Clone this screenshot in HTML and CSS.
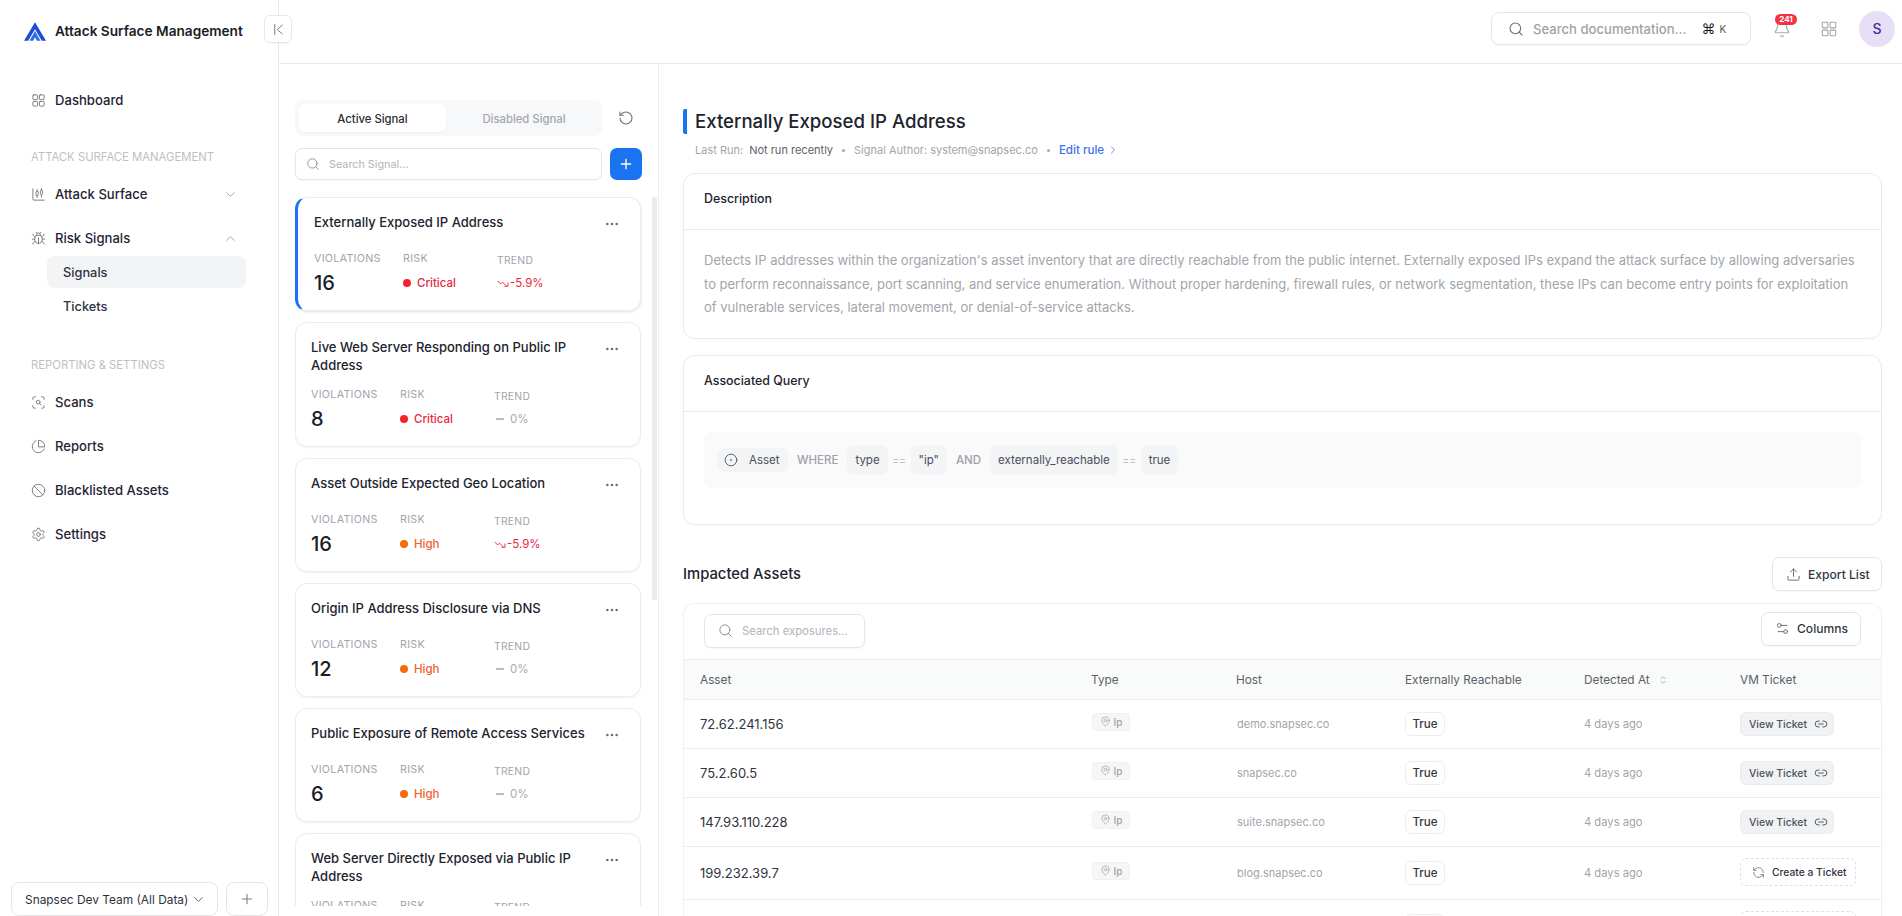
FILE: index.html
```html
<!DOCTYPE html>
<html lang="en">
<head>
<meta charset="utf-8">
<title>Attack Surface Management</title>
<link rel="stylesheet" href="styles.css">
</head>
<body>
<svg class="sprite" aria-hidden="true">
  <symbol id="search" viewBox="0 0 24 24"><circle cx="11" cy="11" r="8"/><path d="m21 21-4.3-4.3"/></symbol>
  <symbol id="chev-down" viewBox="0 0 24 24"><path d="m6 9 6 6 6-6"/></symbol>
  <symbol id="chev-up" viewBox="0 0 24 24"><path d="m18 15-6-6-6 6"/></symbol>
  <symbol id="chev-right" viewBox="0 0 24 24"><path d="m9 18 6-6-6-6"/></symbol>
  <symbol id="plus" viewBox="0 0 24 24"><path d="M5 12h14M12 5v14"/></symbol>
  <symbol id="grid" viewBox="0 0 24 24"><rect x="3" y="3" width="7.5" height="7.5" rx="1.2"/><rect x="13.5" y="3" width="7.5" height="7.5" rx="1.2"/><rect x="3" y="13.5" width="7.5" height="7.5" rx="1.2"/><rect x="13.5" y="13.5" width="7.5" height="7.5" rx="1.2"/></symbol>
  <symbol id="pin" viewBox="0 0 24 24"><path d="M20 10c0 6-8 12-8 12s-8-6-8-12a8 8 0 0 1 16 0Z"/><circle cx="12" cy="10" r="3"/></symbol>
  <symbol id="link" viewBox="0 0 24 24"><path d="M9 17H7A5 5 0 0 1 7 7h2"/><path d="M15 7h2a5 5 0 1 1 0 10h-2"/><path d="M8 12h8"/></symbol>
  <symbol id="cycle" viewBox="0 0 24 24"><path d="M21 12a9 9 0 0 0-15-6.7L3 8"/><path d="M3 3v5h5"/><path d="M3 12a9 9 0 0 0 15 6.7l3-2.7"/><path d="M16 16h5v5"/></symbol>
  <symbol id="dots" viewBox="0 0 24 24"><circle cx="4" cy="12" r="2.2"/><circle cx="12" cy="12" r="2.2"/><circle cx="20" cy="12" r="2.2"/></symbol>
  <symbol id="trend" viewBox="0 0 24 24"><path d="M1 7l6 6 4-4 8 8"/><path d="M23 11v7h-7"/></symbol>
</svg>

<div class="app">
  <aside class="sidebar">
    <div class="brand">
      <svg class="logo" viewBox="0 0 24 20"><path class="logo-a" d="M12 0 24 20h-4.600L12 7.500 4.600 20H0Z"/><path class="logo-b" d="M12 9.500 18 20h-4l-2-3.600L10 20H6Z"/></svg>
      <span class="brand-name">Attack Surface Management</span>
    </div>
    <nav class="nav">
      <a class="nav-item nav-first"><svg class="ico nav-ico"><use href="#grid"/></svg>Dashboard</a>
      <div class="nav-label">Attack Surface Management</div>
      <a class="nav-item"><svg class="ico nav-ico" viewBox="0 0 24 24"><path d="M3 3v16a2 2 0 0 0 2 2h16"/><rect x="8" y="7" width="3.500" height="7" rx="1.700"/><path d="M9.700 4v3M9.700 14v3"/><rect x="15" y="5" width="3.500" height="7" rx="1.700"/><path d="M16.700 2.500V5M16.700 12v4"/></svg>Attack Surface<svg class="ico chev"><use href="#chev-down"/></svg></a>
      <a class="nav-item"><svg class="ico nav-ico" viewBox="0 0 24 24"><path d="m8 2 1.900 1.900M14.100 3.900 16 2M9 7.100v-1a3 3 0 1 1 6 0v1"/><path d="M12 20c-3.300 0-6-2.700-6-6v-3a4 4 0 0 1 4-4h4a4 4 0 0 1 4 4v3c0 3.300-2.700 6-6 6Z"/><path d="M12 20v-9M6.500 9C4.600 8.800 3 7.100 3 5M6 13H2M3 21c0-2.100 1.700-3.900 3.800-4M20.970 5c0 2.100-1.600 3.800-3.500 4M22 13h-4M17.200 17c2.100.1 3.800 1.900 3.800 4"/></svg>Risk Signals<svg class="ico chev"><use href="#chev-up"/></svg></a>
      <a class="sub-item sub-active">Signals</a>
      <a class="sub-item">Tickets</a>
      <div class="nav-label nav-label-2">Reporting &amp; Settings</div>
      <a class="nav-item"><svg class="ico nav-ico" viewBox="0 0 24 24"><path d="M3 7V5a2 2 0 0 1 2-2h2M17 3h2a2 2 0 0 1 2 2v2M21 17v2a2 2 0 0 1-2 2h-2M7 21H5a2 2 0 0 1-2-2v-2"/><circle cx="11.500" cy="11.500" r="3"/><path d="m16 16-2.200-2.200"/></svg>Scans</a>
      <a class="nav-item"><svg class="ico nav-ico" viewBox="0 0 24 24"><path d="M21.200 15.900A10 10 0 1 1 8 2.800"/><path d="M22 12A10 10 0 0 0 12 2v10Z"/></svg>Reports</a>
      <a class="nav-item"><svg class="ico nav-ico" viewBox="0 0 24 24"><circle cx="12" cy="12" r="10"/><path d="m4.900 4.900 14.200 14.200"/></svg>Blacklisted Assets</a>
      <a class="nav-item"><svg class="ico nav-ico" viewBox="0 0 24 24"><path d="M12.200 2h-.400a2 2 0 0 0-2 2v.200a2 2 0 0 1-1 1.700l-.400.300a2 2 0 0 1-2 0l-.200-.100a2 2 0 0 0-2.700.700l-.200.400a2 2 0 0 0 .700 2.700l.200.100a2 2 0 0 1 1 1.700v.500a2 2 0 0 1-1 1.700l-.200.100a2 2 0 0 0-.700 2.700l.200.400a2 2 0 0 0 2.700.700l.200-.100a2 2 0 0 1 2 0l.400.300a2 2 0 0 1 1 1.700v.200a2 2 0 0 0 2 2h.400a2 2 0 0 0 2-2v-.200a2 2 0 0 1 1-1.700l.400-.300a2 2 0 0 1 2 0l.200.100a2 2 0 0 0 2.700-.700l.200-.400a2 2 0 0 0-.700-2.700l-.200-.100a2 2 0 0 1-1-1.700v-.500a2 2 0 0 1 1-1.700l.200-.100a2 2 0 0 0 .700-2.700l-.200-.400a2 2 0 0 0-2.700-.700l-.200.100a2 2 0 0 1-2 0l-.400-.300a2 2 0 0 1-1-1.700V4a2 2 0 0 0-2-2Z"/><circle cx="12" cy="12" r="3"/></svg>Settings</a>
    </nav>
    <div class="team">
      <button class="team-select">Snapsec Dev Team (All Data)<svg class="ico team-chev"><use href="#chev-down"/></svg></button>
      <button class="team-add"><svg class="ico team-plus"><use href="#plus"/></svg></button>
    </div>
  </aside>

  <button class="collapse"><svg class="ico collapse-ico" viewBox="0 0 24 24"><path d="M6 4v16M18 5l-8 7 8 7"/></svg></button>

  <div class="main">
    <header class="topbar">
      <div class="doc-search">
        <svg class="ico doc-ico"><use href="#search"/></svg>
        <span class="doc-text">Search documentation...</span>
        <span class="kbd"><b>⌘</b><i>K</i></span>
      </div>
      <div class="bell">
        <svg class="ico bell-ico" viewBox="0 0 24 24"><path d="M10.300 21a1.900 1.900 0 0 0 3.400 0"/><path d="M3.300 15.300A1 1 0 0 0 4 17h16a1 1 0 0 0 .7-1.700C19.400 14 18 12.500 18 8A6 6 0 0 0 6 8c0 4.500-1.400 6-2.700 7.300"/></svg>
        <span class="badge">241</span>
      </div>
      <svg class="ico apps-ico"><use href="#grid"/></svg>
      <div class="avatar">S</div>
    </header>

    <div class="content">
      <section class="signals">
        <div class="signals-tabs">
          <div class="tabs">
            <div class="tab tab-on">Active Signal</div>
            <div class="tab">Disabled Signal</div>
          </div>
          <svg class="ico reset" viewBox="0 0 24 24"><path d="M3 12a9 9 0 1 0 9-9 9.750 9.750 0 0 0-6.740 2.740L3 8"/><path d="M3 3v5h5"/></svg>
        </div>
        <div class="signals-search">
          <div class="input">
            <svg class="ico input-ico"><use href="#search"/></svg>
            <span>Search Signal...</span>
          </div>
          <button class="add"><svg class="ico add-ico"><use href="#plus"/></svg></button>
        </div>
        <div class="list-wrap">
          <div class="list">
            <article class="card card-on">
              <div class="card-head"><h3>Externally Exposed IP Address</h3><svg class="dots"><use href="#dots"/></svg></div>
              <div class="stats">
                <div class="stat s1"><span class="k">Violations</span><span class="n">16</span></div>
                <div class="stat s2"><span class="k">Risk</span><span class="r crit"><i></i>Critical</span></div>
                <div class="stat s3"><span class="k k3">Trend</span><span class="t down"><svg class="ico tr"><use href="#trend"/></svg>-5.9%</span></div>
              </div>
            </article>
            <article class="card">
              <div class="card-head"><h3>Live Web Server Responding on Public IP Address</h3><svg class="dots"><use href="#dots"/></svg></div>
              <div class="stats">
                <div class="stat s1"><span class="k">Violations</span><span class="n">8</span></div>
                <div class="stat s2"><span class="k">Risk</span><span class="r crit"><i></i>Critical</span></div>
                <div class="stat s3"><span class="k k3">Trend</span><span class="t"><em></em>0%</span></div>
              </div>
            </article>
            <article class="card">
              <div class="card-head"><h3>Asset Outside Expected Geo Location</h3><svg class="dots"><use href="#dots"/></svg></div>
              <div class="stats">
                <div class="stat s1"><span class="k">Violations</span><span class="n">16</span></div>
                <div class="stat s2"><span class="k">Risk</span><span class="r high"><i></i>High</span></div>
                <div class="stat s3"><span class="k k3">Trend</span><span class="t down"><svg class="ico tr"><use href="#trend"/></svg>-5.9%</span></div>
              </div>
            </article>
            <article class="card">
              <div class="card-head"><h3>Origin IP Address Disclosure via DNS</h3><svg class="dots"><use href="#dots"/></svg></div>
              <div class="stats">
                <div class="stat s1"><span class="k">Violations</span><span class="n">12</span></div>
                <div class="stat s2"><span class="k">Risk</span><span class="r high"><i></i>High</span></div>
                <div class="stat s3"><span class="k k3">Trend</span><span class="t"><em></em>0%</span></div>
              </div>
            </article>
            <article class="card">
              <div class="card-head"><h3>Public Exposure of Remote Access Services</h3><svg class="dots"><use href="#dots"/></svg></div>
              <div class="stats">
                <div class="stat s1"><span class="k">Violations</span><span class="n">6</span></div>
                <div class="stat s2"><span class="k">Risk</span><span class="r high"><i></i>High</span></div>
                <div class="stat s3"><span class="k k3">Trend</span><span class="t"><em></em>0%</span></div>
              </div>
            </article>
            <article class="card">
              <div class="card-head"><h3>Web Server Directly Exposed via Public IP Address</h3><svg class="dots"><use href="#dots"/></svg></div>
              <div class="stats">
                <div class="stat s1"><span class="k">Violations</span></div>
                <div class="stat s2"><span class="k">Risk</span></div>
                <div class="stat s3"><span class="k k3">Trend</span></div>
              </div>
            </article>
          </div>
          <div class="scrollbar"></div>
        </div>
      </section>

      <section class="detail">
        <h1 class="title">Externally Exposed IP Address</h1>
        <div class="meta">
          <span>Last Run:</span><span class="meta-val">Not run recently</span><span class="sep"></span>
          <span>Signal Author: system@snapsec.co</span><span class="sep"></span>
          <a class="edit">Edit rule<svg class="ico edit-ico"><use href="#chev-right"/></svg></a>
        </div>

        <div class="panel panel-desc">
          <div class="panel-head">Description</div>
          <p class="desc">Detects IP addresses within the organization's asset inventory that are directly reachable from the public internet. Externally exposed IPs expand the attack surface by allowing adversaries to perform reconnaissance, port scanning, and service enumeration. Without proper hardening, firewall rules, or network segmentation, these IPs can become entry points for exploitation of vulnerable services, lateral movement, or denial-of-service attacks.</p>
        </div>

        <div class="panel panel-query">
          <div class="panel-head">Associated Query</div>
          <div class="query-pad">
            <div class="query">
              <span class="q-asset"><svg class="ico q-ico" viewBox="0 0 24 24"><circle cx="12" cy="12" r="10"/><circle class="fill" cx="12" cy="12" r="1.500"/></svg>Asset</span>
              <span class="q-word">WHERE</span>
              <span class="q-chip">type</span>
              <span class="q-op">==</span>
              <span class="q-chip">"ip"</span>
              <span class="q-word">AND</span>
              <span class="q-chip">externally_reachable</span>
              <span class="q-op">==</span>
              <span class="q-chip">true</span>
            </div>
          </div>
        </div>

        <div class="assets-head">
          <h2>Impacted Assets</h2>
          <button class="btn btn-export"><svg class="ico btn-ico" viewBox="0 0 24 24"><path d="M3 15v4a2 2 0 0 0 2 2h14a2 2 0 0 0 2-2v-4"/><path d="m17 8-5-5-5 5"/><path d="M12 3v12"/></svg>Export List</button>
        </div>

        <div class="table-card">
          <div class="toolbar">
            <div class="input input-exp">
              <svg class="ico input-ico2"><use href="#search"/></svg>
              <span>Search exposures...</span>
            </div>
            <button class="btn btn-cols"><svg class="ico btn-ico" viewBox="0 0 24 24"><path d="M14 17H5M19 7h-9"/><circle cx="17" cy="17" r="3"/><circle cx="7" cy="7" r="3"/></svg>Columns</button>
          </div>
          <div class="row row-head">
            <div>Asset</div><div>Type</div><div>Host</div><div>Externally Reachable</div>
            <div>Detected At<svg class="ico sort" viewBox="0 0 24 24"><path d="m7 15 5 5 5-5M7 9l5-5 5 5"/></svg></div><div>VM Ticket</div>
          </div>
          <div class="row">
            <div class="c-asset">72.62.241.156</div>
            <div><span class="type"><svg class="ico pin"><use href="#pin"/></svg>Ip</span></div>
            <div class="c-host">demo.snapsec.co</div>
            <div><span class="true">True</span></div>
            <div class="c-muted">4 days ago</div>
            <div><span class="view">View Ticket<svg class="ico link"><use href="#link"/></svg></span></div>
          </div>
          <div class="row">
            <div class="c-asset">75.2.60.5</div>
            <div><span class="type"><svg class="ico pin"><use href="#pin"/></svg>Ip</span></div>
            <div class="c-host">snapsec.co</div>
            <div><span class="true">True</span></div>
            <div class="c-muted">4 days ago</div>
            <div><span class="view">View Ticket<svg class="ico link"><use href="#link"/></svg></span></div>
          </div>
          <div class="row">
            <div class="c-asset">147.93.110.228</div>
            <div><span class="type"><svg class="ico pin"><use href="#pin"/></svg>Ip</span></div>
            <div class="c-host">suite.snapsec.co</div>
            <div><span class="true">True</span></div>
            <div class="c-muted">4 days ago</div>
            <div><span class="view">View Ticket<svg class="ico link"><use href="#link"/></svg></span></div>
          </div>
          <div class="row row-tall">
            <div class="c-asset">199.232.39.7</div>
            <div><span class="type"><svg class="ico pin"><use href="#pin"/></svg>Ip</span></div>
            <div class="c-host">blog.snapsec.co</div>
            <div><span class="true">True</span></div>
            <div class="c-muted">4 days ago</div>
            <div><span class="create"><svg class="ico cyc"><use href="#cycle"/></svg>Create a Ticket</span></div>
          </div>
          <div class="row row-tall">
            <div></div>
            <div></div>
            <div></div>
            <div><span class="true true-empty"></span></div>
            <div></div>
            <div><span class="create"></span></div>
          </div>
        </div>
      </section>
    </div>
  </div>
</div>
</body>
</html>
```
FILE: styles.css
```css
* { box-sizing: border-box; }
html, body { margin: 0; height: 100%; overflow: hidden; }
body { font-family: Inter, "Noto Sans", sans-serif; color: #1f2430; background: #fff; font-size: 13px; }
h1, h2, h3, p { margin: 0; }
button { font: inherit; color: inherit; background: #fff; cursor: pointer; }
i, em { font-style: normal; }
.sprite { display: none; }
.ico { fill: none; stroke: currentColor; stroke-width: 1.6; stroke-linecap: round; stroke-linejoin: round; flex: none; }
.fill { fill: currentColor; stroke: none; }

.app { display: flex; height: 916px; position: relative; }

/* sidebar */
.sidebar { width: 279px; flex: none; border-right: 1px solid #e8e9ec; display: flex; flex-direction: column; position: relative; }
.brand { height: 62px; display: flex; align-items: center; padding-left: 24px; gap: 9px; }
.logo { width: 22px; height: 19px; }
.logo-a { fill: #1d4ed8; }
.logo-b { fill: #2f6fe4; }
.brand-name { font-size: 13.650px; font-weight: 600; color: #1a1d29; white-space: nowrap; }
.nav { padding: 0 40px 0 31px; display: flex; flex-direction: column; flex: 1; }
.nav-item { height: 44px; display: flex; align-items: center; font-size: 13.100px; font-weight: 500; color: #262336; white-space: nowrap; }
.nav-first { margin-top: 16px; }
.nav-ico { width: 15px; height: 15px; margin-right: 9px; color: #75787f; stroke-width: 1.5; }
.chev { width: 15px; height: 15px; margin-left: auto; color: #a4a7ad; }
.nav-label { margin-top: 24px; margin-bottom: 4px; height: 22px; line-height: 22px; font-size: 11.300px; color: #bdbfc5; text-transform: uppercase; white-space: nowrap; }
.nav-label-2 { margin-top: 33px; height: 20px; line-height: 20px; margin-bottom: 5px; }
.sub-item { height: 32px; margin: 0 -8px 0 16px; padding-left: 16px; display: flex; align-items: center; font-size: 12.800px; font-weight: 500; color: #2f3340; border-radius: 8px; flex: none; }
.sub-active { margin-top: -4px; background: #f3f4f6; margin-bottom: 2px; }
.team { display: flex; gap: 8px; padding: 0 10px 0 11px; height: 34px; flex: none; }
.team button { height: 34px; border: 1px solid #e4e5e8; border-radius: 8px; }
.team-select { width: 207px; display: flex; align-items: center; justify-content: space-between; padding: 0 11px 0 13px; font-size: 11.900px; color: #30333e; white-space: nowrap; }
.team-chev { width: 15px; height: 15px; color: #666a72; }
.team-add { width: 42px; display: flex; align-items: center; justify-content: center; padding: 0; }
.team-plus { width: 16px; height: 16px; color: #7b7e85; }

.collapse { position: absolute; left: 264px; top: 15px; width: 28px; height: 28px; border: 1px solid #e6e7ea; border-radius: 6px; display: flex; align-items: center; justify-content: center; padding: 0; box-shadow: 0 1px 1px rgba(0,0,0,.03); z-index: 2; }
.collapse-ico { width: 15px; height: 15px; color: #6f7278; stroke-width: 1.5; }

/* main */
.main { flex: 1; min-width: 0; display: flex; flex-direction: column; }
.topbar { height: 64px; flex: none; border-bottom: 1px solid #e8e9ec; display: flex; align-items: center; justify-content: flex-end; padding: 0 7px 6px 0; }
.doc-search { width: 260px; height: 33px; border: 1px solid #e4e5e8; border-radius: 8px; display: flex; align-items: center; padding: 0 0 0 16px; box-shadow: 0 1px 2px rgba(0,0,0,.04); }
.doc-ico { width: 16px; height: 16px; color: #6b6e75; margin-right: 9px; }
.doc-text { font-size: 13.100px; font-weight: 500; color: #9fa2a9; white-space: nowrap; }
.kbd { display: flex; align-items: center; margin-left: 15px; gap: 4px; }
.kbd b { font: 500 14px "DejaVu Sans", sans-serif; color: #1a1d29; }
.kbd i { font-size: 10px; color: #555; }
.bell { position: relative; width: 18px; height: 18px; margin-left: 22px; }
.bell-ico { width: 18px; height: 18px; color: #a7aab0; display: block; }
.badge { position: absolute; left: 2px; top: -6px; width: 22px; height: 11px; background: #f5333f; color: #fff; border-radius: 6px; font-size: 8px; font-weight: 700; line-height: 11px; text-align: center; }
.apps-ico { width: 18px; height: 18px; color: #a0a3a9; margin-left: 29px; stroke-width: 1.400; }
.avatar { width: 36px; height: 36px; border-radius: 50%; background: #e7dff5; color: #4a2c9a; margin-left: 21px; display: flex; align-items: center; justify-content: center; font-size: 14px; font-weight: 500; }

.content { flex: 1; min-height: 0; display: flex; }

/* signal list */
.signals { width: 380px; flex: none; border-right: 1px solid #ededef; padding: 36px 0 0 16px; display: flex; flex-direction: column; }
.signals-tabs { display: flex; align-items: center; }
.tabs { width: 307px; height: 36px; background: #f7f8f9; border-radius: 8px; padding: 4px; display: flex; }
.tab { width: 147px; display: flex; align-items: center; justify-content: center; font-size: 11.300px; font-weight: 500; color: #a4a7ad; padding-top: 1px; }
.tab + .tab { flex: 1; padding-left: 4px; }
.tab-on { background: #fff; border-radius: 6px; color: #2a2d38; box-shadow: 0 1px 2px rgba(0,0,0,.04); }
.reset { width: 16px; height: 16px; margin-left: 16px; color: #6e7177; }
.signals-search { display: flex; gap: 8px; margin-top: 12px; }
.input { border: 1px solid #e4e5e8; border-radius: 7px; display: flex; align-items: center; color: #b1b4ba; box-shadow: 0 1px 2px rgba(0,0,0,.04); }
.signals-search .input { width: 307px; height: 32px; padding-left: 10px; font-size: 10.800px; }
.input-ico { width: 14px; height: 14px; color: #8d9096; margin-right: 9px; }
.add { width: 32px; height: 32px; padding: 0; border: 0; background: #1a73f0; border-radius: 7px; display: flex; align-items: center; justify-content: center; }
.add-ico { width: 16px; height: 16px; color: #fff; stroke-width: 2; }
.list-wrap { position: relative; margin-top: 17px; height: 709px; overflow: hidden; }
.list { width: 346px; display: flex; flex-direction: column; gap: 11px; padding-bottom: 4px; }
.card { border: 1px solid #ececef; border-radius: 12px; padding: 15px 21px 13px 15px; box-shadow: 0 1px 2px rgba(0,0,0,.05); background: #fff; flex: none; }
.card-on { border-left: 3px solid #1a73f0; padding-left: 16px; box-shadow: 0 1px 3px rgba(0,0,0,.12); }
.card-head { display: flex; justify-content: space-between; min-height: 25px; }
.card h3 { font-size: 13px; line-height: 18px; font-weight: 500; color: #20232e; width: 280px; }
.dots { width: 14px; height: 14px; fill: #6c6f76; margin-top: 4px; flex: none; }
.stats { display: flex; margin-top: 14px; }
.stat { display: flex; flex-direction: column; }
.s1 { width: 89px; }
.s2 { width: 94px; }
.k { font-size: 10.700px; line-height: 14px; letter-spacing: .3px; text-transform: uppercase; color: #a1a4aa; }
.k3 { margin-top: 1px; margin-bottom: -1px; font-size: 10.300px; }
.n { font-size: 20px; line-height: 28px; font-weight: 500; color: #1a1d29; margin-top: 3px; }
.r, .t { display: flex; align-items: center; font-size: 11.500px; line-height: 28px; margin-top: 3px; }
.r i { width: 8px; height: 8px; border-radius: 50%; margin-right: 6px; }
.crit { color: #e8263c; font-weight: 500; }
.crit i { background: #f5222d; }
.high { color: #f0602e; font-weight: 500; }
.high i { background: #f96a0c; }
.t { color: #a8abb1; }
.t em { width: 8px; height: 1.500px; background: #b9bcc1; margin: 0 6px 0 2px; }
.down { color: #e8263c; }
.tr { width: 12px; height: 11px; margin-right: 1px; stroke-width: 2; }
.scrollbar { position: absolute; left: 357px; top: 0; width: 5px; height: 403px; background: #ebebed; border-radius: 3px; }

/* detail */
.detail { flex: 1; min-width: 0; padding: 0 20px 0 24px; overflow: hidden; }
.title { margin-top: 45px; height: 25px; border-left: 4px solid #1a73f0; border-radius: 2px 0 0 2px; padding-left: 8px; font-size: 18.600px; line-height: 25px; font-weight: 500; color: #20232e; }
.meta { margin-top: 6px; height: 20px; padding-left: 12px; display: flex; align-items: center; font-size: 11px; color: #a2a5ab; white-space: nowrap; }
.meta-val { color: #5d6068; margin-left: 6px; }
.sep { width: 3px; height: 3px; border-radius: 50%; background: #a6a9af; margin: 0 9px; }
.edit { color: #3f74e6; font-weight: 500; font-size: 11.600px; display: flex; align-items: center; }
.edit-ico { width: 12px; height: 12px; margin-left: 3px; }
.panel { border: 1px solid #e9eaec; border-radius: 12px; box-shadow: 0 1px 2px rgba(0,0,0,.03); }
.panel-desc { margin-top: 13px; height: 166px; }
.panel-query { margin-top: 16px; height: 170px; }
.panel-head { height: 56px; border-bottom: 1px solid #e9eaec; padding: 0 20px 6px; display: flex; align-items: center; font-size: 12.400px; font-weight: 500; color: #20232e; }
.desc { padding: 19px 20px 0; font-size: 13px; line-height: 23.500px; color: #a2a5ab; }
.query-pad { padding: 20px 20px 0; }
.query { height: 56px; background: #fafafb; border-radius: 8px; padding: 0 13px; display: flex; align-items: center; font-size: 11.500px; color: #4a4d56; }
.q-asset { height: 24px; width: 71px; background: #f3f4f6; border-radius: 6px; display: flex; align-items: center; padding: 0 7px; }
.q-ico { width: 14px; height: 14px; margin-right: 11px; color: #55585f; }
.q-word { color: #9ea1a8; font-weight: 500; margin: 0 9px; }
.q-chip { height: 30px; background: #f3f4f6; border-radius: 7px; display: flex; align-items: center; padding: 0 8px; }
.q-op { color: #b4b7bc; margin: 0 4.500px; font-size: 10.500px; }
.assets-head { margin-top: 32px; height: 34px; display: flex; align-items: center; justify-content: space-between; }
.assets-head h2 { font-size: 14.800px; font-weight: 500; color: #20232e; }
.btn { height: 34px; border: 1px solid #e4e5e8; border-radius: 7px; display: flex; align-items: center; font-size: 12.100px; font-weight: 500; color: #33363f; padding: 0 12px; white-space: nowrap; box-shadow: 0 1px 2px rgba(0,0,0,.03); }
.btn-ico { width: 15px; height: 15px; margin-right: 7px; color: #6e7177; }
.btn-export { width: 110px; padding-left: 13px; }
.btn-cols { width: 100px; padding-left: 13px; margin-top: -6px; }
.table-card { margin-top: 12px; border: 1px solid #f0f0f2; border-bottom: 0; border-radius: 12px 12px 0 0; }
.toolbar { height: 55px; padding: 0 20px 0 20px; display: flex; align-items: center; justify-content: space-between; }
.input-exp { width: 161px; height: 34px; padding-left: 13px; font-size: 11.300px; margin-top: -2px; }
.input-ico2 { width: 15px; height: 15px; color: #8d9096; margin-right: 9px; }
.row { display: grid; grid-template-columns: 391px 145px 169px 179px 156px 1fr; height: 49px; align-items: center; padding-left: 16px; border-top: 1px solid #eceded; font-size: 12px; }
.row-head { height: 40px; background: #f9fafa; font-size: 11.800px; color: #5d6068; }
.row-head > div { display: flex; align-items: center; }
.row-tall { height: 53px; }
.sort { width: 10px; height: 10px; margin-left: 8px; color: #8d9096; }
.c-asset { font-size: 13px; color: #31343d; }
.c-muted { color: #a2a5ab; font-size: 11.200px; }
.c-host { color: #a2a5ab; font-size: 11px; padding-left: 1px; }
.type { width: 38px; height: 18px; background: #f6f6f7; border-radius: 4px; border: 1px solid #f0f0f2; display: flex; align-items: center; justify-content: center; gap: 3px; font-size: 10px; color: #a0a3a9; font-weight: 500; margin: -5px 0 0 1px; }
.pin { width: 11px; height: 11px; color: #a0a3a9; }
.true { display: inline-flex; height: 24px; width: 40px; justify-content: center; border: 1px solid #eeeef0; border-radius: 6px; align-items: center; font-size: 11.500px; font-weight: 500; color: #30333c; vertical-align: middle; }
.view { display: inline-flex; height: 24px; width: 94px; background: #f1f2f4; border: 1px solid #eaebed; border-radius: 6px; align-items: center; padding-left: 8px; font-size: 10.400px; color: #4e5159; font-weight: 500; white-space: nowrap; }
.link { width: 14px; height: 14px; margin-left: 7px; }
.create { display: inline-flex; height: 28px; width: 116px; border: 1px dashed #e0e1e4; border-radius: 6px; align-items: center; padding-left: 11px; font-size: 10.300px; color: #30333c; font-weight: 500; white-space: nowrap; margin-top: -2px; vertical-align: middle; }
.cyc { width: 13px; height: 13px; margin-right: 7px; color: #7b7e85; }
```
